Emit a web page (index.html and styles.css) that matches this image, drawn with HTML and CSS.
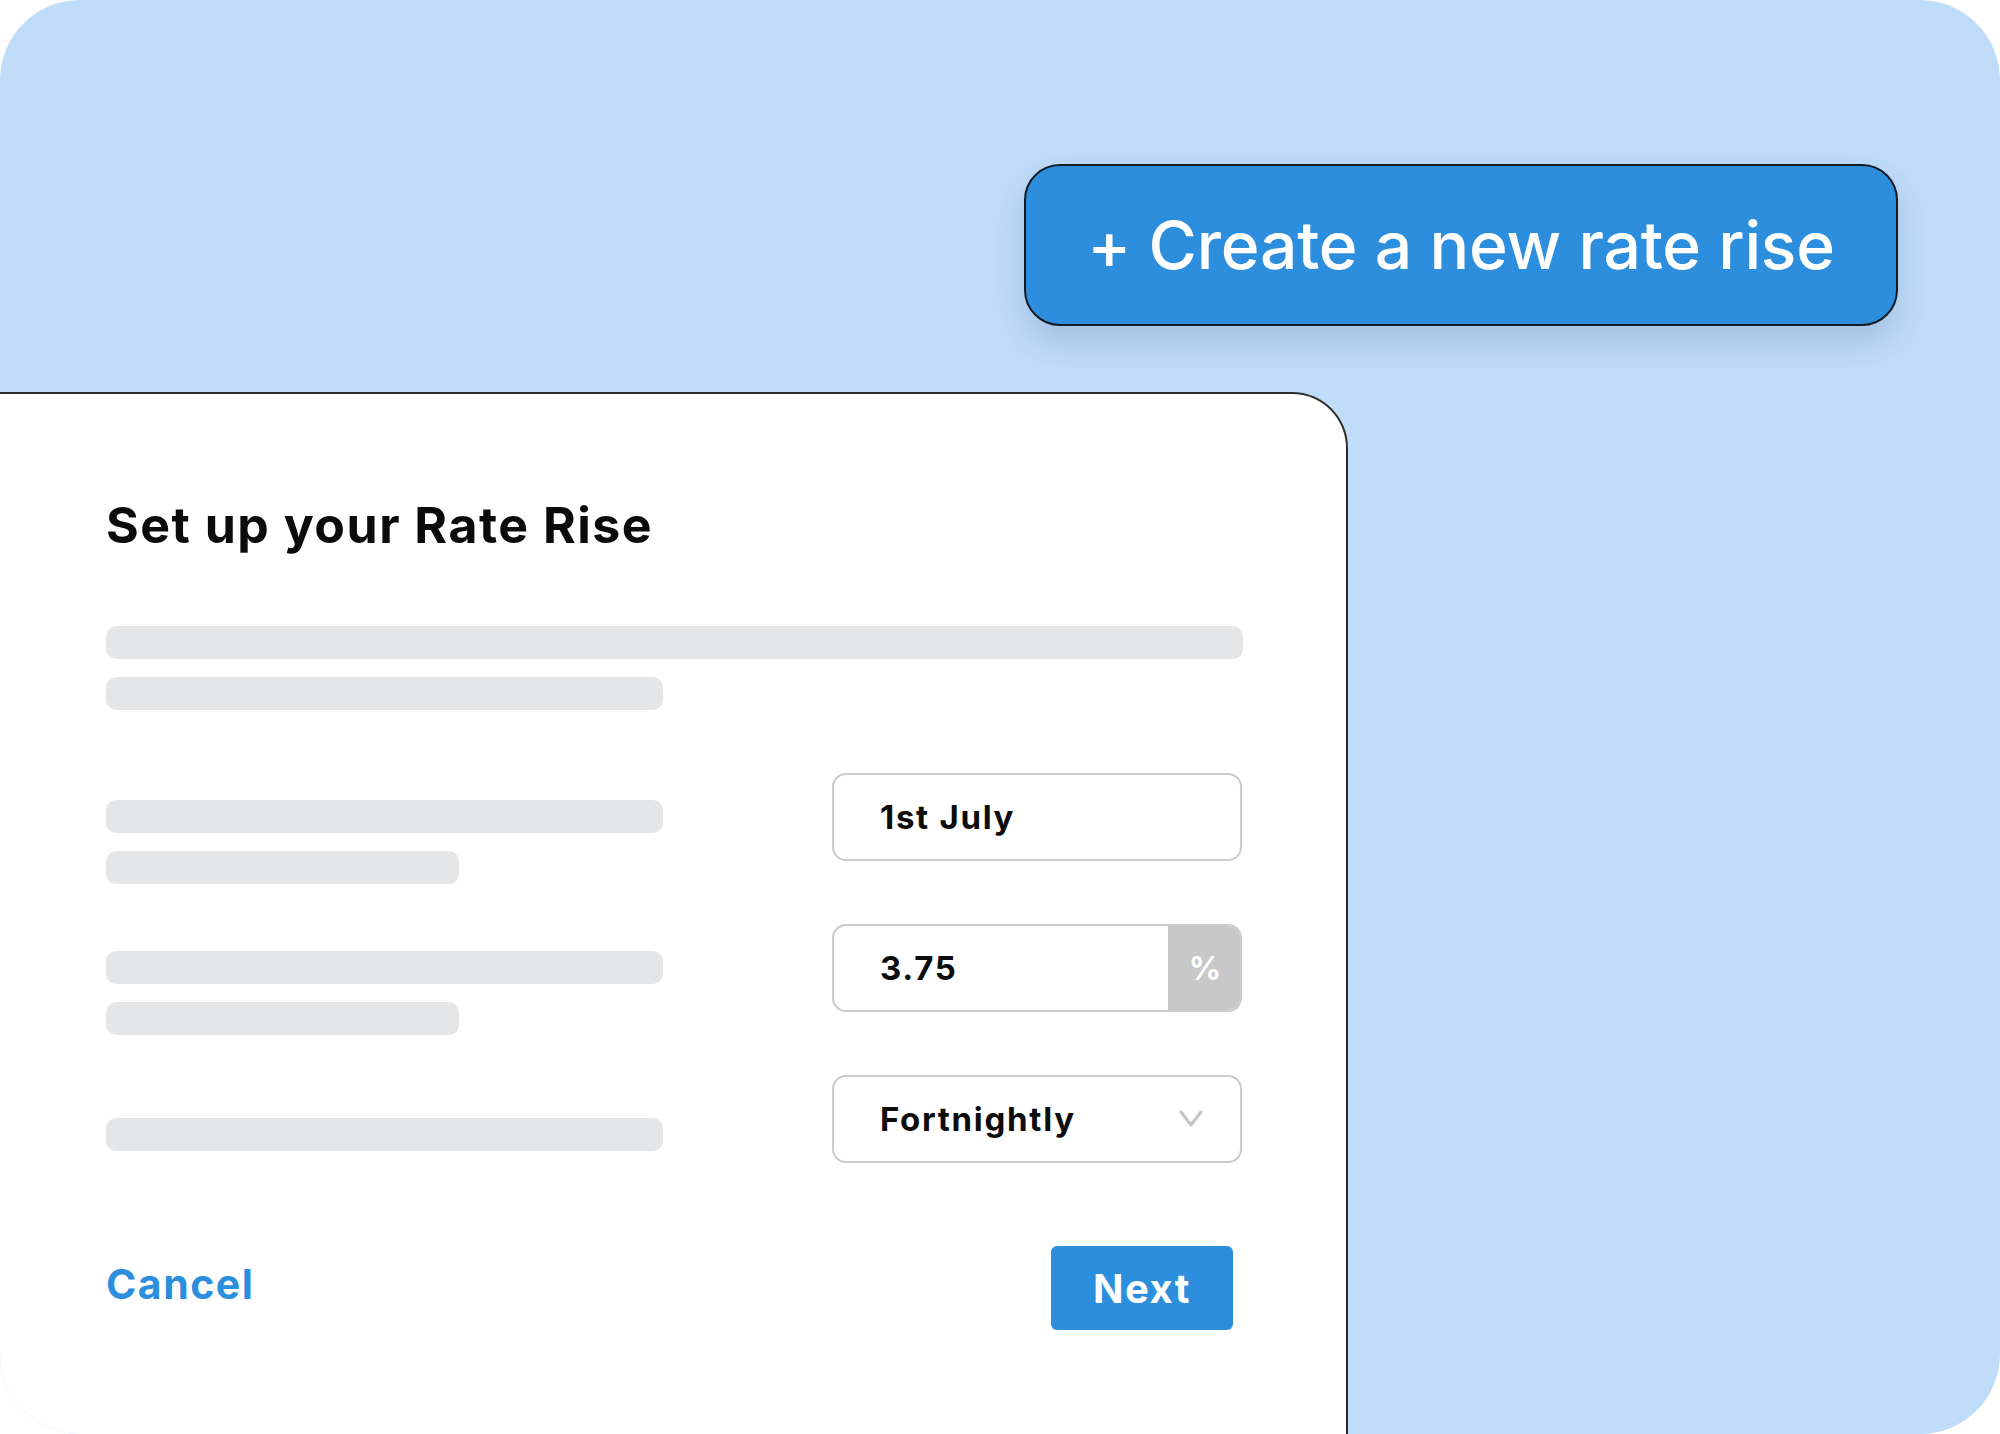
FILE: index.html
```html
<!DOCTYPE html>
<html lang="en">
<head>
<meta charset="utf-8">
<title>Set up your Rate Rise</title>
<link rel="stylesheet" href="styles.css">
</head>
<body>
<div class="frame">
  <div class="top">
    <button class="create-btn" type="button">+ Create a new rate rise</button>
  </div>
  <section class="card">
    <h1 class="title">Set up your Rate Rise</h1>
    <div class="intro">
      <div class="bar bar-full"></div>
      <div class="bar bar-long"></div>
    </div>
    <div class="rows">
      <div class="row">
        <div class="label">
          <div class="bar bar-long"></div>
          <div class="bar bar-short"></div>
        </div>
        <div class="field"><span class="value">1st July</span></div>
      </div>
      <div class="row">
        <div class="label">
          <div class="bar bar-long"></div>
          <div class="bar bar-short"></div>
        </div>
        <div class="field field-addon">
          <span class="value">3.75</span>
          <span class="addon">%</span>
        </div>
      </div>
      <div class="row">
        <div class="label label-single">
          <div class="bar bar-long"></div>
        </div>
        <div class="field field-select">
          <span class="value">Fortnightly</span>
          <svg class="chevron" width="26" height="20" viewBox="0 0 26 20" aria-hidden="true">
            <path d="M3 3 L13 16 L23 3" fill="none" stroke="#c6c6c6" stroke-width="3.2" stroke-linecap="round" stroke-linejoin="round"/>
          </svg>
        </div>
      </div>
    </div>
    <div class="footer">
      <a class="cancel" href="#">Cancel</a>
      <button class="next" type="button">Next</button>
    </div>
  </section>
</div>
</body>
</html>
```

FILE: styles.css
```css
* { box-sizing: border-box; }

html, body {
  margin: 0;
  padding: 0;
  background: #ffffff;
}

body {
  font-family: Inter, "Noto Sans", "Liberation Sans", sans-serif;
  width: 2000px;
  height: 1434px;
  overflow: hidden;
}

.frame {
  width: 2000px;
  height: 1434px;
  background: #bfdcf9;
  border-radius: 80px;
  overflow: hidden;
  display: flex;
  flex-direction: column;
}

.top {
  height: 392px;
  flex: none;
  padding-top: 164px;
  padding-left: 1024px;
}

.create-btn {
  width: 874px;
  height: 162px;
  background: #2c8edd;
  border: 2px solid #151c24;
  border-radius: 36px;
  color: #ffffff;
  font-family: Inter, "Noto Sans", "Liberation Sans", sans-serif;
  font-size: 66px;
  font-weight: 500;
  letter-spacing: -0.2px;
  box-shadow: 0 16px 30px rgba(60, 100, 150, 0.22);
  padding: 0;
  cursor: pointer;
}

.card {
  flex: 1;
  width: 1348px;
  background: #ffffff;
  border-top: 2px solid #2d2d2d;
  border-right: 2px solid #2d2d2d;
  border-top-right-radius: 56px;
  padding: 101px 0 0 106px;
}

.title {
  margin: 0;
  font-size: 50px;
  line-height: 60px;
  font-weight: 700;
  color: #0b0b0b;
  letter-spacing: 1.5px;
}

.bar {
  height: 33px;
  border-radius: 10px;
  background: #e5e6e8;
}

.bar-full { width: 1137px; }
.bar-long { width: 557px; }
.bar-short { width: 353px; }

.intro {
  margin-top: 71px;
  display: flex;
  flex-direction: column;
  gap: 18px;
}

.rows {
  margin-top: 63px;
  width: 1136px;
  display: flex;
  flex-direction: column;
  gap: 40px;
}

.row {
  display: flex;
  justify-content: space-between;
  align-items: flex-start;
}

.label {
  display: flex;
  flex-direction: column;
  gap: 18px;
  padding-top: 27px;
}

.label-single { padding-top: 43px; }

.field {
  width: 410px;
  height: 88px;
  border: 2px solid #cbcbcb;
  border-radius: 14px;
  display: flex;
  align-items: center;
  padding-left: 46px;
  position: relative;
  overflow: hidden;
}

.value {
  font-size: 33px;
  font-weight: 700;
  color: #0d0d0d;
  letter-spacing: 1.7px;
  flex: 1;
}

.addon {
  width: 74px;
  align-self: stretch;
  margin: -2px -2px -2px 0;
  background: #c8c8c8;
  color: #ffffff;
  font-size: 32px;
  font-weight: 700;
  display: flex;
  align-items: center;
  justify-content: center;
}

.field-select { padding-right: 36px; }

.chevron { flex: none; }

.footer {
  margin-top: 83px;
  width: 1127px;
  display: flex;
  justify-content: space-between;
  align-items: center;
}

.cancel {
  font-size: 41px;
  font-weight: 700;
  color: #2b8fdd;
  text-decoration: none;
  letter-spacing: 1.5px;
  margin-bottom: 8px;
}

.next {
  width: 182px;
  height: 84px;
  border: none;
  border-radius: 6px;
  background: #2b8fdd;
  color: #ffffff;
  font-family: Inter, "Noto Sans", "Liberation Sans", sans-serif;
  font-size: 40px;
  font-weight: 700;
  letter-spacing: 1.5px;
  padding: 0;
  cursor: pointer;
}
```
